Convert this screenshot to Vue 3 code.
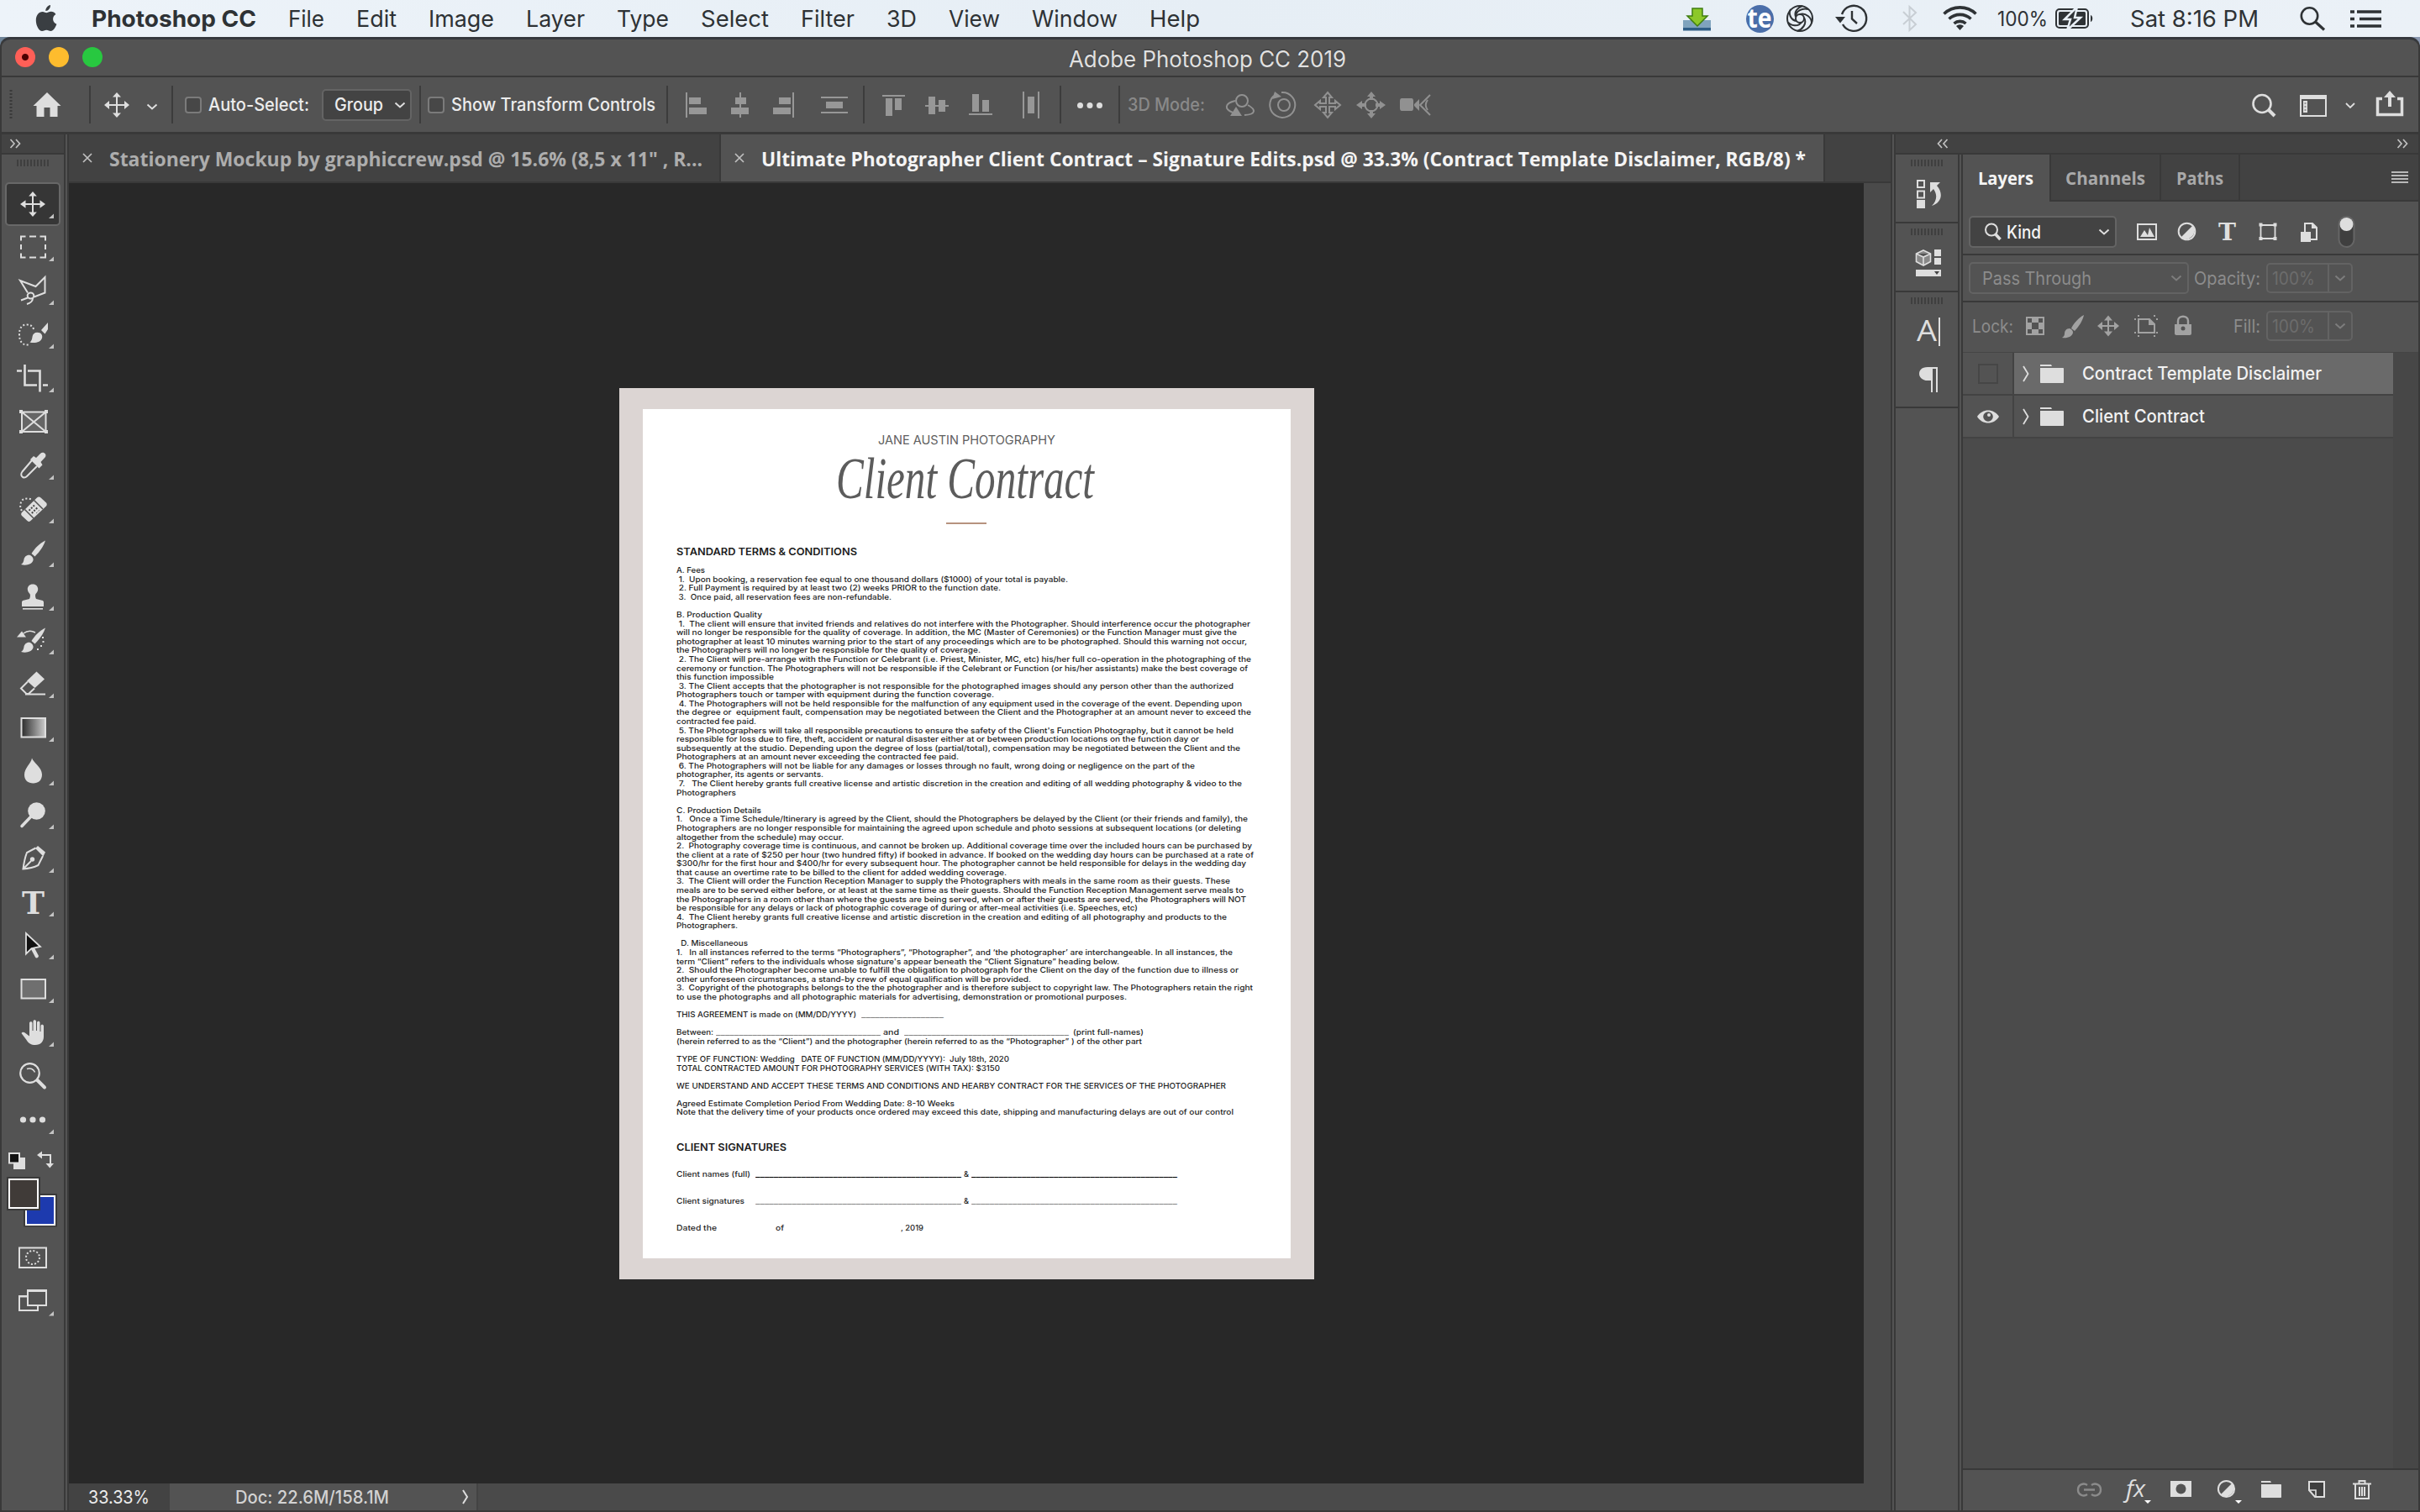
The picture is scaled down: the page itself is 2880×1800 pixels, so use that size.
<script setup>
// stretches a text to the given width in pixels
const vFit = {
  mounted(el, { value }) {
    const natural = el.getBoundingClientRect().width;
    el.style.transform = `scaleX(${value / natural})`;
    el.style.width = value + "px";
  },
};

const menus = [
  ["File", 43],
  ["Edit", 48],
  ["Image", 78],
  ["Layer", 70],
  ["Type", 62],
  ["Select", 81],
  ["Filter", 64],
  ["3D", 36],
  ["View", 61],
  ["Window", 102],
  ["Help", 60],
];

const brush =
  '<path d="M54 11.5C48 14 41 21 37.500 27l4 3.500C47 25 52 18 54 11.500z"/><path d="M36 29c-4-1-7 2-7.500 5-.4 3-1.500 5-3.500 6 6 1.800 13 0 14.500-5 .5-2-.8-4.500-3.500-6z"/>';

// every tool is drawn in a 72x52 cell, starting 4px from the left edge
const tools = [
  { flyout: true, art: '<path class="ln" d="M28 26H50M39 15V37"/><path d="M24 26l6.500-4.800v9.600zM54 26l-6.500-4.800v9.600zM39 11l-4.800 5.500h9.600zM39 41l-4.800-5.500h9.600z"/>' },
  { flyout: true, art: '<path class="ln" d="M25 18.500V13.500H30.500M35 13.500h8M47.500 13.500H54V18.500M54 23v6M54 33.500V38.500H47.500M43 38.500h-8M30.500 38.500H25V33.500M25 29v-6"/>' },
  { flyout: true, art: '<path class="ln" d="M33 28.500L24 14 42.500 21 53.500 10V28.500L40.500 33.500M33 34.500L25 37.500M39 35c0 3-3 6-7 7"/><ellipse class="ln" cx="36.500" cy="32" rx="3.800" ry="3.500"/>' },
  { flyout: true, art: '<path class="ln" stroke-dasharray="2 2.400" d="M40 20c-1-4-4-5.500-8-5.500-6 0-9 4-9 11.500s3 12.500 9 12.500h3"/><path d="M57 12L49 21l4.500 4.500L57 20zM48 24.500c-5-2-9 0-9.500 4.500-.3 3-1 5-3 6.500 6 1.500 13 0 14.500-5 .7-2.500 0-4.500-2-6z"/>' },
  { flyout: true, art: '<path class="ln" stroke-width="2.600" d="M20 17.500h6M29.500 10V34.500H44M33 17.500H47.500V42.500M51 34.500h6"/>' },
  { flyout: false, art: '<path fill="#666" class="ln" d="M26 14.500H54.500V38H26zM26 14.500L54.500 38M54.500 14.500L26 38"/><path d="M23 12h4v4h-4zM53 12h4v4h-4zM23 36h4v4h-4zM53 36h4v4h-4z"/>' },
  { flyout: true, art: '<path class="ln" d="M38 20L26.500 33.500c-2 2.500-1.500 5 .5 6.500 2 1 3.500.5 5-1L44 27"/><path d="M36 19l4-4 3 2 5-5c3-3 8 0 6 4l-5.500 6 2 3.500-4 4z"/>' },
  { flyout: true, art: '<path class="ln" stroke-dasharray="2 2.400" d="M26 28c-3-4-2-10 1-13 3-2 8-2 11 0"/><path d="M44 12.500c1.500-1.500 3-1.500 4.500 0l6.500 6c1 1.200 1 2.500 0 4L37 39.500c-1.500 1.800-3 1.800-4.500.5L26 34c-1.200-1.200-1-2.500 0-4z"/><path stroke="#535353" stroke-width="1.500" d="M40.500 15.500l10.500 10.500M29.500 26.500L40 37"/><path fill="none" stroke="#444" stroke-width="2" stroke-dasharray="2 2.500" d="M39.500 21.500l7 6.500M37 24l7 6.500M34.500 26.500l6.500 6"/>' },
  { flyout: true, art: brush },
  { flyout: true, art: '<path d="M39 11.500c4 0 6.200 2.700 6.200 6 0 2.500-1.700 4.200-2.700 5.500-.7 1-.7 4 .5 6l7 1.700c1.500.4 2 1.200 2 2.300v5H26v-5c0-1.100.5-1.900 2-2.300l7-1.700c1.200-2 1.200-5 .5-6-1-1.300-2.700-3-2.700-5.500 0-3.300 2.200-6 6.200-6z"/><path d="M27 40h24v1.600H27z"/>' },
  { flyout: true, art: brush + '<path d="M20 22.500l6-7 5 7z"/><path class="ln" stroke-width="1.500" d="M28 18c4-3 9-3.500 14-1"/><path d="M50 22h2v2h-2zM50.500 27h2v2h-2zM48 32h2v2h-2zM44 36h2v2h-2z"/>' },
  { flyout: true, art: '<path d="M43.500 11.500L53 20.500 41.500 31 32 22.500z"/><path class="ln" d="M33 23.500L25 31.500l6.500 6.500H34l7-6.500M30 38.500H54"/>' },
  { flyout: true, art: '<rect x="25.500" y="15" width="28.500" height="22.500" fill="url(#grad)" stroke="#dedede" stroke-width="2"/>' },
  { flyout: true, art: '<path d="M38 10.500c1.500 5 12 11 12 19.500 0 7-4.500 10.500-10.500 10.500S29 37 29 30.500C29 22 37 17 38 10.500z"/>' },
  { flyout: true, art: '<circle cx="43.500" cy="21.500" r="10.300"/><path class="ln" stroke-width="3.500" stroke-linecap="round" d="M37 28L26 39.500"/>' },
  { flyout: true, art: '<path class="ln" d="M42.500 13.500L32 19c-2 5-3.500 12-4.500 19.500 7-.5 13-2 18-4.500l5.500-11M28.500 37.500L37 29"/><circle cx="38.500" cy="27" r="2.700"/><path d="M42 14l3-3 9 7.500-2.500 5z"/>' },
  { flyout: true, art: '<text x="39.500" y="39.500" text-anchor="middle" font-family="DejaVu Serif, serif" font-weight="bold" font-size="37" textLength="27" lengthAdjust="spacingAndGlyphs">T</text>' },
  { flyout: true, art: '<path fill="#111" stroke="#dedede" stroke-width="1.800" d="M31 12V36.500L37.500 30 48 28z"/><path d="M37 31l4-1.500 5 9.500c-1 3-3 3-4 1.500z"/>' },
  { flyout: true, art: '<rect x="25.500" y="15" width="28.500" height="22.500" fill="#6f6f6f" stroke="#dedede" stroke-width="2"/>' },
  { flyout: true, art: '<path d="M25.500 27c1.500-2.500 4-1 5.500.5l4 3V15c0-2.500 3.500-2.500 3.500 0v9h1V13c0-2.500 3.500-2.500 3.500 0v11h1V14.500c0-2.500 3.500-2.500 3.500 0V25h1v-6.500c0-2.500 3.500-2 3.500 0V31c0 6-3.500 10-10 10-5 0-8-2-10.500-6z"/>' },
  { flyout: false, art: '<circle class="ln" stroke-width="2.200" cx="35.500" cy="22.500" r="11.300"/><path class="ln" stroke-width="1.500" d="M32 17.500c4-1.500 8 0 9.500 4"/><path class="ln" stroke-width="4" stroke-linecap="round" d="M44.500 31L53 39.500"/>' },
  { flyout: true, art: '<circle cx="27.500" cy="26" r="3.600"/><circle cx="39" cy="26" r="3.600"/><circle cx="50.500" cy="26" r="3.600"/>' },
];

// [text, width]; null is an empty line
const terms = [
  ["A. Fees", 34],
  [" 1.  Upon booking, a reservation fee equal to one thousand dollars ($1000) of your total is payable.", 466],
  [" 2. Full Payment is required by at least two (2) weeks PRIOR to the function date.", 386],
  [" 3.  Once paid, all reservation fees are non-refundable.", 256],
  null,
  ["B. Production Quality", 102],
  [" 1.  The client will ensure that invited friends and relatives do not interfere with the Photographer. Should interference occur the photographer", 683],
  ["will no longer be responsible for the quality of coverage. In addition, the MC (Master of Ceremonies) or the Function Manager must give the", 667],
  ["photographer at least 10 minutes warning prior to the start of any proceedings which are to be photographed. Should this warning not occur,", 679],
  ["the Photographers will no longer be responsible for the quality of coverage.", 362],
  [" 2. The Client will pre-arrange with the Function or Celebrant (i.e. Priest, Minister, MC, etc) his/her full co-operation in the photographing of the", 684],
  ["ceremony or function. The Photographers will not be responsible if the Celebrant or Function (or his/her assistants) make the best coverage of", 680],
  ["this function impossible", 116],
  [" 3. The Client accepts that the photographer is not responsible for the photographed images should any person other than the authorized", 663],
  ["Photographers touch or tamper with equipment during the function coverage.", 378],
  [" 4. The Photographers will not be held responsible for the malfunction of any equipment used in the coverage of the event. Depending upon", 673],
  ["the degree or  equipment fault, compensation may be negotiated between the Client and the Photographer at an amount never to exceed the", 684],
  ["contracted fee paid.", 95],
  [" 5. The Photographers will take all responsible precautions to ensure the safety of the Client's Function Photography, but it cannot be held", 663],
  ["responsible for loss due to fire, theft, accident or natural disaster either at or between production locations on the function day or", 622],
  ["subsequently at the studio. Depending upon the degree of loss (partial/total), compensation may be negotiated between the Client and the", 671],
  ["Photographers at an amount never exceeding the contracted fee paid.", 336],
  [" 6. The Photographers will not be liable for any damages or losses through no fault, wrong doing or negligence on the part of the", 617],
  ["photographer, its agents or servants.", 175],
  [" 7.   The Client hereby grants full creative license and artistic discretion in the creation and editing of all wedding photography & video to the", 673],
  ["Photographers", 71],
  null,
  ["C. Production Details", 101],
  ["1.   Once a Time Schedule/Itinerary is agreed by the Client, should the Photographers be delayed by the Client (or their friends and family), the", 680],
  ["Photographers are no longer responsible for maintaining the agreed upon schedule and photo sessions at subsequent locations (or deleting", 672],
  ["altogether from the schedule) may occur.", 199],
  ["2.  Photography coverage time is continuous, and cannot be broken up. Additional coverage time over the included hours can be purchased by", 685],
  ["the client at a rate of $250 per hour (two hundred fifty) if booked in advance. If booked on the wedding day hours can be purchased at a rate of", 687],
  ["$300/hr for the first hour and $400/hr for every subsequent hour. The photographer cannot be held responsible for delays in the wedding day", 678],
  ["that cause an overtime rate to be billed to the client for added wedding coverage.", 393],
  ["3.  The Client will order the Function Reception Manager to supply the Photographers with meals in the same room as their guests. These", 659],
  ["meals are to be served either before, or at least at the same time as their guests. Should the Function Reception Management serve meals to", 675],
  ["the Photographers in a room other than where the guests are being served, when or after their guests are served, the Photographers will NOT", 678],
  ["be responsible for any delays or lack of photographic coverage of during or after-meal activities (i.e. Speeches, etc)", 549],
  ["4.  The Client hereby grants full creative license and artistic discretion in the creation and editing of all photography and products to the", 655],
  ["Photographers.", 73],
  null,
  ["  D. Miscellaneous", 85],
  ["1.   In all instances referred to the terms “Photographers”, “Photographer”, and ‘the photographer’ are interchangeable. In all instances, the", 662],
  ["term “Client” refers to the individuals whose signature's appear beneath the “Client Signature” heading below.", 527],
  ["2.  Should the Photographer become unable to fulfill the obligation to photograph for the Client on the day of the function due to illness or", 669],
  ["other unforeseen circumstances, a stand-by crew of equal qualification will be provided.", 422],
  ["3.  Copyright of the photographs belongs to the the photographer and is therefore subject to copyright law. The Photographers retain the right", 686],
  ["to use the photographs and all photographic materials for advertising, demonstration or promotional purposes.", 536],
  null,
];

const closing = [
  ["(herein referred to as the “Client”) and the photographer (herein referred to as the “Photographer” ) of the other part", 554],
  null,
  ["TYPE OF FUNCTION: Wedding   DATE OF FUNCTION (MM/DD/YYYY):  July 18th, 2020", 396],
  ["TOTAL CONTRACTED AMOUNT FOR PHOTOGRAPHY SERVICES (WITH TAX): $3150", 385],
  null,
  ["WE UNDERSTAND AND ACCEPT THESE TERMS AND CONDITIONS AND HEARBY CONTRACT FOR THE SERVICES OF THE PHOTOGRAPHER", 654],
  null,
  ["Agreed Estimate Completion Period From Wedding Date: 8-10 Weeks", 331],
  ["Note that the delivery time of your products once ordered may exceed this date, shipping and manufacturing delays are out of our control", 663],
];

const layers = [
  { name: "Contract Template Disclaimer", width: 285, visible: false, selected: true },
  { name: "Client Contract", width: 146, visible: true, selected: false },
];
</script>

<template>
  <div class="screen">
    <header class="menubar">
      <svg class="apple" viewBox="0 0 26 32" width="26" height="32">
        <path d="M18 0c.3 3.500-2.500 7-5.700 7C12 3.800 15 .5 18 0zM13.300 9.300c1.200 0 3-1.500 5.500-1.500 2.200 0 4.300 1.200 5.600 3.100-5 3-4 9.800 1 11.800-1.500 4.300-4.200 8.300-6.900 8.300-2 0-2.700-1.300-5.200-1.300-2.500 0-3.400 1.300-5.200 1.300C4.500 31 .8 24.500.8 18.200c0-6.200 3.700-10.200 7.700-10.200 2.200 0 3.800 1.300 4.800 1.300z" />
      </svg>
      <b v-fit="196" class="app-name">Photoshop CC</b>
      <nav class="menus">
        <span v-for="m in menus" :key="m[0]" v-fit="m[1]">{{ m[0] }}</span>
      </nav>
      <div class="tray">
        <svg viewBox="2000 0 370 44" width="370" height="44">
          <path d="M2003 24h33v12h-33z" fill="#7fa3bd" />
          <path d="M2003 33h33v3.500h-33z" fill="#2e5d86" />
          <path d="M2014 10h12v9h6l-12 12-12-12h6z" fill="#8cc829" stroke="#3f7d10" stroke-width="1.500" />
          <circle cx="2094.500" cy="22.500" r="16.500" fill="#4a6ea9" />
          <text x="2094" y="33" text-anchor="middle" fill="#fff" font-family="Open Sans, sans-serif" font-weight="bold" font-size="33" textLength="29" lengthAdjust="spacingAndGlyphs">te</text>
          <g fill="none" stroke="#2e3235" stroke-width="2">
            <circle cx="2142" cy="22" r="15" />
            <circle cx="2142" cy="22" r="5" />
            <path d="M2137 20c0-7 8-11 15-9M2142 17c7-2 14 4 14 10M2147 21c4 7-2 14-8 16M2144 26.500c-4 6-13 4-16 0M2138 25c-7-1-10-9-7-14M2137 20c-2-6 2-11 8-13" />
            <path d="M2192 17a15 15 0 1 1 1 12M2204 13v9.500l6 5.500" stroke-width="2.400" />
            <path d="M2265 14l15 15-7.500 7V8l7.500 7-15 14" stroke="#c8ced4" />
          </g>
          <path d="M2184 20h12l-6 7.500z" fill="#2e3235" />
          <g fill="none" stroke="#2e3235" stroke-width="3.600">
            <path d="M2313.500 16.500a27.500 27.500 0 0 1 38 0M2319.500 22.500a19 19 0 0 1 26 0M2325.500 28a10.500 10.500 0 0 1 14 0" />
          </g>
          <path d="M2328 31a6.500 6.500 0 0 1 9 0l-4.500 5z" fill="#2e3235" />
        </svg>
        <span v-fit="60" class="percent">100%</span>
        <svg class="battery" viewBox="2446 0 46 44" width="46" height="44">
          <rect x="2447" y="11" width="38" height="22" rx="4" fill="none" stroke="#2e3235" stroke-width="2" />
          <rect x="2450" y="14" width="32" height="16" rx="1.500" fill="#2e3235" />
          <path d="M2488 18c3 1 3 7 0 8z" fill="#2e3235" />
          <path d="M2472 8l-15 15h7l-4 13 16-15h-7z" fill="#2e3235" stroke="#e9f0f7" stroke-width="2.500" />
        </svg>
        <span v-fit="153" class="clock">Sat 8:16 PM</span>
        <svg viewBox="2736 0 104 44" width="104" height="44" fill="none" stroke="#2e3235">
          <circle cx="2748.500" cy="19" r="9.700" stroke-width="2.600" />
          <path d="M2755.500 26l10.500 9.500" stroke-width="3.200" />
          <path d="M2797 14h5M2797 22.500h5M2797 31h5M2805 14h29M2808 22.500h26M2805 31h29" stroke-width="3.600" />
        </svg>
      </div>
    </header>

    <div class="window">
      <div class="titlebar">
        <div class="lights">
          <i class="close"></i>
          <i class="minimize"></i>
          <i class="maximize"></i>
        </div>
        <span v-fit="330" class="title">Adobe Photoshop CC 2019</span>
      </div>

      <div class="options">
        <svg viewBox="2 92 204 66" width="204" height="66" class="light">
          <path stroke="#3a3a3a" stroke-width="3" stroke-dasharray="2 2" d="M13 107v36" />
          <path d="M56 110l16.500 16h-4v13h-9v-11h-7v11h-9v-13h-4z" />
          <path class="sep" d="M107 102v45M205 102v45" />
          <path class="ln" d="M128 125h23M139 114v22" />
          <path d="M124 125l6-5v10zM154 125l-6-5v10zM139 110l-5 5.500h10zM139 140l-5-5.500h10z" />
          <path class="ln" stroke-width="2" d="M175.500 124.500l5.500 5 5.500-5" />
        </svg>
        <i class="check first"></i>
        <span v-fit="120" class="label">Auto-Select:</span>
        <div class="select group">
          <span v-fit="58">Group</span>
          <svg viewBox="0 0 14 8" width="14" height="8"><path class="ln" d="M1.500 1.500L7 6.500l5.500-5" /></svg>
        </div>
        <svg viewBox="490 92 19 66" width="19" height="66"><path class="sep" d="M500 102v45" /></svg>
        <i class="check"></i>
        <span v-fit="243" class="label">Show Transform Controls</span>
        <svg viewBox="780 92 562 66" width="562" height="66">
          <path class="sep" d="M794 102v45M1028 102v45M1262 102v45M1332 102v45" />
          <g fill="#979797">
            <path d="M816 110h2v30h-2zM820 116h14v8h-14zM820 128h21v8h-21z" />
            <path d="M880 110h2v30h-2zM875 116h13v8h-13zM870 128h21v8h-21z" />
            <path d="M943 110h2v30h-2zM927 116h14v8h-14zM920 128h21v8h-21z" />
            <path d="M977 115h32v2h-32zM977 133h32v2h-32zM983 121h20v8h-20z" />
            <path d="M1050 113h27v2h-27zM1054 117h8v21h-8zM1065 117h8v14h-8z" />
            <path d="M1101 125h28v2h-28zM1105 115h8v21h-8zM1117 119h8v14h-8z" />
            <path d="M1153 135h28v2h-28zM1157 112h8v21h-8zM1169 119h8v14h-8z" />
            <path d="M1217 109h2v32h-2zM1235 109h2v32h-2zM1223 115h8v20h-8z" />
          </g>
          <g fill="#dedede">
            <circle cx="1285.500" cy="125.500" r="3.500" />
            <circle cx="1297" cy="125.500" r="3.500" />
            <circle cx="1308.500" cy="125.500" r="3.500" />
          </g>
        </svg>
        <span v-fit="92" class="label dim">3D Mode:</span>
        <svg viewBox="1456 92 252 66" width="252" height="66" class="mode">
          <g fill="none" stroke="#919191" stroke-width="2">
            <circle cx="1479" cy="120" r="7" />
            <path d="M1471 120c-13 3-13 10-3 14M1486 125c9 5 11 11-4 12" />
            <path d="M1517 114a15 15 0 1 0 9-4" />
            <circle cx="1529" cy="125" r="7" />
            <path d="M1581 110l5 6h-3v7h7v-3l6 5-6 5v-3h-7v7h3l-5 6-5-6h3v-7h-7v3l-6-5 6-5v3h7v-7h-3z" />
            <circle cx="1633" cy="125" r="7.500" />
            <path d="M1703 113l-12 12 12 12M1700 119c-3 4-3 8 0 12" />
          </g>
          <path fill="#919191" d="M1465 138l7-11 7 11zM1515 118l3-9 8 6zM1633 109l5 6h-3v4h-4v-4h-3zM1633 141l5-6h-3v-4h-4v4h-3zM1615 125l7-5v3h5v4h-5v3zM1650 125l-7-5v3h-5v4h5v3zM1667 120c0-2 1-3 2-3h12c1 0 2 1 2 3v9c0 2-1 3-2 3h-12c-1 0-2-1-2-3zM1684 124l6-6v14l-6-6z" />
        </svg>
        <svg viewBox="2676 92 190 66" width="190" height="66" class="light right">
          <circle class="ln" cx="2692" cy="123.500" r="10.500" stroke-width="2.600" />
          <path class="ln" d="M2699 130l8 8" stroke-width="4" />
          <path class="ln" d="M2738 115h30v23h-30z" />
          <path d="M2737 113h32v5h-32zM2741 120h5v14h-5z" />
          <path stroke="#535353" d="M2742.500 123h2M2742.500 127h2M2742.500 131h2" />
          <path class="ln" stroke-width="1.800" d="M2792 123l5 5 5-5" />
          <path class="ln" stroke-width="3.500" d="M2835 117.500h-5.500v19h29v-19h-5.500" />
          <path d="M2844 108l7 8h-5v11h-4v-11h-5z" />
        </svg>
      </div>

      <div class="workspace">
        <aside class="toolbar">
          <div class="dock-head">
            <svg viewBox="0 0 14 12" width="14" height="12"><path class="thin" d="M1.500 1L6 6l-4.500 5M8 1l4.500 5L8 11" /></svg>
          </div>
          <i class="grip"></i>
          <div class="tools">
            <div v-for="(tool, i) in tools" :key="i" class="tool">
              <svg viewBox="4 0 72 52" width="72" height="52">
                <defs v-if="i === 12">
                  <linearGradient id="grad"><stop stop-color="#2a2a2a" /><stop offset="1" stop-color="#ccc" /></linearGradient>
                </defs>
                <rect v-if="i === 0" x="7" y="1" width="64" height="50" rx="4" fill="#363636" stroke="#686868" stroke-width="2" />
                <g v-html="tool.art"></g>
                <path v-if="tool.flyout" d="M64 37.500v5.500h-6z" fill="#c4c4c4" />
              </svg>
            </div>
          </div>
          <svg class="light" viewBox="4 1360 72 212" width="72" height="212">
            <path d="M16 1379h14v14H16z" />
            <path d="M11 1374h12v11.500H11z" fill="#111" stroke="#dedede" stroke-width="2" />
            <path class="ln" d="M49 1376h11v10" />
            <path d="M44 1376l6-4.500v9zM54.500 1386h9.500l-4.700 5.500z" />
            <path d="M28 1422h40v39.500H28z" fill="#3a3a3a" />
            <path d="M31 1425h34v34H31z" fill="#1d3aae" stroke="#fff" stroke-width="2" />
            <path d="M8 1402h40v40H8z" fill="#3a3a3a" />
            <path d="M11 1405h34v34H11z" fill="#403b38" stroke="#fff" stroke-width="2" />
            <path class="ln" d="M23 1486.500h32v23.500H23z" />
            <circle class="ln" cx="39" cy="1498" r="8" stroke-dasharray="2 2.200" />
            <path class="ln" d="M32 1544h-9v17h22v-5M33 1537.500h22v17.500H33z" />
            <path d="M32 1536h24v3H32zM22 1543h10v2.500H22z" />
            <path d="M64 1562v5.500h-6z" fill="#c4c4c4" />
          </svg>
        </aside>

        <main class="documents">
          <div class="tabs">
            <div class="tab">
              <svg viewBox="0 0 12 12" width="12" height="12"><path class="thin" d="M1 1l10 10M11 1L1 11" /></svg>
              <span v-fit="706">Stationery Mockup by graphiccrew.psd @ 15.6% (8,5 x 11" , R...</span>
            </div>
            <div class="tab active">
              <svg viewBox="0 0 12 12" width="12" height="12"><path class="thin" d="M1 1l10 10M11 1L1 11" /></svg>
              <span v-fit="1243">Ultimate Photographer Client Contract – Signature Edits.psd @ 33.3% (Contract Template Disclaimer, RGB/8) *</span>
            </div>
          </div>

          <div class="canvas">
            <div class="artboard">
              <article class="page">
                <p class="studio"><span v-fit="211">JANE AUSTIN PHOTOGRAPHY</span></p>
                <h1><span v-fit="307">Client Contract</span></h1>
                <i class="rule"></i>
                <h2 class="first"><span v-fit="215">STANDARD TERMS &amp; CONDITIONS</span></h2>
                <div class="lines">
                  <p v-for="(line, i) in terms" :key="i"><span v-if="line" v-fit="line[1]">{{ line[0] }}</span></p>
                  <p>
                    <span v-fit="214">THIS AGREEMENT is made on (MM/DD/YYYY)</span>
                    <span v-fit="98" class="blank after">__________________</span>
                  </p>
                  <p></p>
                  <p>
                    <span v-fit="44">Between:</span>
                    <span v-fit="196" class="blank near">____________________________________</span>
                    <span v-fit="19" class="near">and</span>
                    <span v-fit="196" class="blank after">____________________________________</span>
                    <span v-fit="84" class="after">(print full-names)</span>
                  </p>
                  <p v-for="(line, i) in closing" :key="'c' + i"><span v-if="line" v-fit="line[1]">{{ line[0] }}</span></p>
                </div>
                <h2 class="second"><span v-fit="131">CLIENT SIGNATURES</span></h2>
                <div class="signatures">
                  <p>
                    <span v-fit="88">Client names (full)</span>
                    <span v-fit="245" class="blank strong after">_____________________________________________</span>
                    <span v-fit="6" class="near">&amp;</span>
                    <span v-fit="245" class="blank strong near">_____________________________________________</span>
                  </p>
                  <p>
                    <span v-fit="81">Client signatures</span>
                    <span v-fit="245" class="blank far">_____________________________________________</span>
                    <span v-fit="6" class="near">&amp;</span>
                    <span v-fit="245" class="blank near">_____________________________________________</span>
                  </p>
                  <p class="dated">
                    <span v-fit="48">Dated the</span>
                    <span v-fit="10">of</span>
                    <span v-fit="27">, 2019</span>
                  </p>
                </div>
              </article>
            </div>
          </div>
          <footer class="status">
            <div class="zoom"><span v-fit="73">33.33%</span></div>
            <div class="doc-size">
              <span v-fit="183">Doc: 22.6M/158.1M</span>
              <svg viewBox="0 0 10 20" width="10" height="20"><path class="ln" d="M2 2l5 8-5 8" /></svg>
            </div>
          </footer>
        </main>

        <aside class="side">
          <div class="side-head">
            <svg viewBox="0 0 14 12" width="14" height="12"><path class="thin" d="M6 1L1.500 6 6 11M12.500 1L8 6l4.500 5" /></svg>
            <svg viewBox="0 0 14 12" width="14" height="12"><path class="thin" d="M1.500 1L6 6l-4.500 5M8 1l4.500 5L8 11" /></svg>
          </div>
          <div class="side-body">
            <div class="dock">
              <div class="cell">
                <i class="grip"></i>
                <svg viewBox="2256 200 74 60" width="74" height="60" class="light">
                  <path class="ln" d="M2282 215h8v8h-8zM2282 227.500h8v8h-8z" />
                  <path d="M2281 238h10v10h-10zM2297 217h12l-4 4c8 9 6 20-6 24 6-6 7-13 2-20l-4 4z" />
                </svg>
              </div>
              <div class="cell">
                <i class="grip"></i>
                <svg viewBox="2256 282 74 60" width="74" height="60" class="light">
                  <path fill="#888" stroke="#dedede" stroke-width="1.600" d="M2289 298l8.500 4v9.500l-8.500 4.500-8.500-4.500V302zM2280.500 302l8.500 4 8.500-4M2289 306v10" />
                  <path d="M2302 297h8v8h-8zM2302 307h8v8h-8zM2280 321h30v8h-30z" />
                  <path fill="#444" d="M2302 323h6l-3 4z" />
                </svg>
              </div>
              <div class="cell tall">
                <i class="grip"></i>
                <svg viewBox="2256 364 74 116" width="74" height="116" class="light">
                  <text x="2281" y="406" font-family="Open Sans, sans-serif" font-size="34" textLength="24" lengthAdjust="spacingAndGlyphs">A</text>
                  <path d="M2307 378h2v34h-2z" />
                  <path d="M2306 437v30h-2v-28h-4v28h-2v-14h-4c-5 0-10-3-10-8s4-8 10-8z" />
                </svg>
              </div>
              <div class="rest"></div>
            </div>

            <section class="panel">
              <div class="panel-tabs">
                <div class="ptab active"><span v-fit="66">Layers</span></div>
                <div class="ptab channels"><span v-fit="95">Channels</span></div>
                <div class="ptab paths"><span v-fit="56">Paths</span></div>
                <svg class="burger" viewBox="0 0 20 16" width="20" height="16"><path stroke="#b8b8b8" stroke-width="2" d="M0 2h20M0 6h20M0 10h20M0 14h20" /></svg>
              </div>

              <div class="row filter">
                <div class="select kind">
                  <svg viewBox="0 0 22 22" width="22" height="22"><circle class="ln" cx="9" cy="8.500" r="7" /><path class="ln" stroke-width="3.600" d="M13.500 13.500l6 6.500" /></svg>
                  <span v-fit="41">Kind</span>
                  <svg class="chev" viewBox="0 0 14 8" width="14" height="8"><path class="ln" d="M1.500 1.500L7 6.500l5.500-5" /></svg>
                </div>
                <svg viewBox="2519 250 300 52" width="300" height="52" class="light">
                  <path class="ln" d="M2544 267h22v18h-22z" />
                  <path d="M2547 282l5-8 4 6 2-9 6 11z" />
                  <circle class="ln" cx="2602.500" cy="275.500" r="9.800" />
                  <path d="M2609.500 268.500a10 10 0 0 1-14 14z" />
                  <text x="2650.500" y="286" text-anchor="middle" font-family="DejaVu Serif, serif" font-weight="bold" font-size="28" textLength="21" lengthAdjust="spacingAndGlyphs">T</text>
                  <path class="ln" stroke-width="1.800" d="M2690.500 268h17v16h-17z" />
                  <path class="knob" d="M2688.500 265.500h4v4h-4zM2705.500 265.500h4v4h-4zM2688.500 282h4v4h-4zM2705.500 282h4v4h-4z" />
                  <path class="ln" d="M2743 276v-10h9l5 5v14h-7" />
                  <path d="M2738 276h12v12h-12zM2751 265v7h7z" />
                  <rect x="2783.500" y="258" width="18" height="36" rx="9" fill="#3f3f3f" stroke="#666" stroke-width="2" />
                  <circle cx="2792.500" cy="267" r="8" />
                </svg>
              </div>

              <div class="row blend">
                <div class="select mode-select">
                  <span v-fit="130">Pass Through</span>
                  <svg viewBox="0 0 14 8" width="14" height="8"><path class="ln" d="M1.500 1.500L7 6.500l5.500-5" /></svg>
                </div>
                <span v-fit="79" class="field-label">Opacity:</span>
                <div class="number">
                  <span v-fit="51">100%</span>
                  <svg viewBox="0 0 14 8" width="14" height="8"><path class="ln" d="M1.500 1.500L7 6.500l5.500-5" /></svg>
                </div>
              </div>

              <div class="row lock">
                <span v-fit="49" class="lock-label">Lock:</span>
                <svg viewBox="2396 361 262 54" width="262" height="54" fill="#a2a2a2">
                  <path fill="none" stroke="#a2a2a2" stroke-width="2" d="M2412 378h20v20h-20z" />
                  <path d="M2418 378h8v6h-8zM2412 384h6v8h-6zM2426 384h6v8h-6zM2418 392h8v6h-8z" />
                  <path d="M2480 375c-6 3-13 11-15 16l4 3c5-5 10-13 11-19zM2463 391c-4 0-6 3-6 6 0 2-1 4-3 5 6 1 12-1 13-6 0-2-1-4-4-5z" />
                  <path fill="none" stroke="#a2a2a2" stroke-width="2" d="M2500 388h18M2509 379v18" />
                  <path d="M2496 388l6-5v10zM2522 388l-6-5v10zM2509 375.500l-5 6h10zM2509 400.500l-5-6h10z" />
                  <path fill="none" stroke="#a2a2a2" stroke-width="2" d="M2545 380h13l6 6v10h-19zM2558 380v6h6" />
                  <path d="M2540 379h2v2h-2zM2566 379h2v2h-2zM2540 395h2v2h-2zM2566 395h2v2h-2zM2544 375h2v2h-2zM2563 375h2v2h-2zM2544 399h2v2h-2zM2563 399h2v2h-2zM2557 379l8 8h-8z" />
                  <path d="M2588 386h20v11c0 1-1 2-2 2h-16c-1 0-2-1-2-2z" />
                  <path fill="none" stroke="#a2a2a2" stroke-width="2.400" d="M2592 386v-4c0-7 12-7 12 0v4" />
                  <circle cx="2598" cy="391" r="2.500" fill="#535353" />
                </svg>
                <span v-fit="32" class="fill-label">Fill:</span>
                <div class="number">
                  <span v-fit="51">100%</span>
                  <svg viewBox="0 0 14 8" width="14" height="8"><path class="ln" d="M1.500 1.500L7 6.500l5.500-5" /></svg>
                </div>
              </div>

              <div class="layer-list">
                <div v-for="layer in layers" :key="layer.name" class="layer" :class="{ selected: layer.selected }">
                  <div class="eye">
                    <svg v-if="layer.visible" viewBox="0 0 26 18" width="26" height="18">
                      <path fill="#dedede" d="M0 9C6-1 20-1 26 9 20 19 6 19 0 9z" />
                      <circle cx="13" cy="9" r="5.800" fill="#535353" />
                      <circle cx="14" cy="7" r="2" fill="#dedede" />
                    </svg>
                    <i v-else class="hidden-box"></i>
                  </div>
                  <div class="layer-main">
                    <svg viewBox="0 0 54 26" width="54" height="26" class="light">
                      <path class="ln" stroke-width="1.800" d="M2 4l5.500 9L2 22" />
                      <path d="M22 2h13l1 2H22zM22 6h27c.6 0 1 .4 1 1v16c0 .6-.4 1-1 1H23c-.6 0-1-.4-1-1z" />
                    </svg>
                    <span v-fit="layer.width">{{ layer.name }}</span>
                  </div>
                </div>
              </div>

              <footer class="panel-foot">
                <svg viewBox="2336 1750 542 48" width="542" height="48" class="light">
                  <g fill="none" stroke="#8b8b8b" stroke-width="2.400">
                    <path d="M2484 1768c-4-3-11-1-11 5.500s7 8.500 11 5.500M2489 1768c4-3 11-1 11 5.500s-7 8.500-11 5.500M2480 1773.500h13" />
                  </g>
                  <text x="2530" y="1782" font-family="Open Sans, sans-serif" font-style="italic" font-size="27" textLength="23" lengthAdjust="spacingAndGlyphs">fx</text>
                  <path d="M2552 1786h8l-4 4zM2660 1786h8l-4 4z" fill="#fff" />
                  <path d="M2583 1763h25v19h-25z" />
                  <circle cx="2595.500" cy="1772.500" r="6" fill="#535353" />
                  <circle class="ln" cx="2649.500" cy="1772.500" r="9.600" />
                  <path d="M2656.500 1765.500a10 10 0 0 1-14 14z" />
                  <path d="M2691 1763h11l1 2h-12zM2691 1767h23c.6 0 1 .4 1 1v14c0 .6-.4 1-1 1h-22c-.6 0-1-.4-1-1z" />
                  <path class="ln" fill="#3f3f3f" d="M2748 1764h18v18h-11l-7-8z" />
                  <path class="ln" stroke-width="1.600" d="M2748 1774h8v8" />
                  <path class="ln" d="M2800 1766.500h22M2803 1767v17h16v-17M2807.500 1766v-3h7v3M2808 1770v11M2811 1770v11M2814 1770v11" />
                </svg>
              </footer>
            </section>
          </div>
        </aside>
      </div>
    </div>
  </div>
</template>

<style>
body {
  margin: 0;
  background: #3a3a3a;
}
.ln {
  stroke: #dedede;
}
.ln:not([fill]) {
  fill: none;
}
.ln:not([stroke-width]) {
  stroke-width: 2;
}
</style>

<style scoped>
.screen {
  width: 2880px;
  height: 1800px;
  overflow: hidden;
  display: flex;
  flex-direction: column;
  background: linear-gradient(90deg, #6d8296, #8a97b0);
  font-family: Inter, "Liberation Sans", sans-serif;
  font-size: 21px;
  color: #ececec;
}
span,
.app-name {
  display: inline-block;
  flex: none;
  width: max-content;
  white-space: pre;
  transform-origin: 0 50%;
}
svg {
  display: block;
  flex: none;
}
p,
h1,
h2 {
  margin: 0;
}
.light {
  fill: #dedede;
}
.sep {
  stroke: #3c3c3c;
  stroke-width: 2;
}
.thin {
  fill: none;
  stroke: #c0c0c0;
  stroke-width: 1.7;
}

/* system menu bar */
.menubar {
  height: 44px;
  flex: none;
  display: flex;
  align-items: center;
  background: linear-gradient(90deg, #edf3f9, #e6eef5 50%, #ebf1f7);
  color: #2e3235;
  font-size: 27.5px;
}
.apple {
  margin: 0 41px 0 42px;
  height: 32px;
  fill: #3a3e42;
}
.app-name {
  font-weight: 700;
}
.menus {
  display: flex;
  gap: 38px;
  margin-left: 37.5px;
}
.tray {
  display: flex;
  align-items: center;
  margin-left: auto;
  margin-right: 40px;
}
.percent {
  font-size: 24px;
  margin-left: 7px;
}
.battery {
  margin-left: 9px;
}
.clock {
  margin: 0 48px 0 43px;
}

/* window */
.window {
  flex: 1;
  min-height: 0;
  display: flex;
  flex-direction: column;
  background: #535353;
  border: 2px solid #393939;
  border-top: 3px solid #35383d;
  border-radius: 12px 12px 0 0;
  overflow: hidden;
}
.titlebar {
  height: 43px;
  flex: none;
  display: flex;
  align-items: center;
  border-bottom: 2px solid #393939;
}
.lights {
  display: flex;
  gap: 16px;
  margin-left: 16px;
  width: 1254px;
  margin-top: -2px;
}
.lights i {
  width: 24px;
  height: 24px;
  border-radius: 50%;
}
.lights .close {
  background: radial-gradient(circle, #4d0000 3.5px, #ff5f57 4.5px);
}
.lights .minimize {
  background: #febc2e;
}
.lights .maximize {
  background: #28c840;
}
.title {
  font-size: 27px;
  color: #e0e0e0;
  margin-top: 3px;
  text-shadow: 0 -1px 1px #333;
}
.options {
  height: 65px;
  flex: none;
  display: flex;
  align-items: center;
  border-bottom: 3px solid #393939;
  font-weight: 500;
}
.check {
  box-sizing: border-box;
  flex: none;
  width: 20px;
  height: 20px;
  border: 2px solid #7b7b7b;
  border-radius: 4px;
  background: #474747;
}
.check.first {
  margin-left: 14px;
}
.label {
  margin-left: 8px;
}
.label.dim {
  margin-left: 0;
  color: #898989;
}
.mode {
  margin-left: 21px;
}
.right {
  margin-left: auto;
  margin-right: 12px;
}
.select {
  box-sizing: border-box;
  flex: none;
  height: 38px;
  display: flex;
  align-items: center;
  justify-content: space-between;
  border: 2px solid #646464;
  border-radius: 5px;
  background: #434343;
}
.group {
  width: 107px;
  margin-left: 15px;
  padding: 0 5px 0 13px;
}

.workspace {
  flex: 1;
  min-height: 0;
  display: flex;
  border-bottom: 2px solid #393939;
  margin-bottom: -2px;
}
.toolbar {
  width: 74px;
  flex: none;
  background: #535353;
  border-right: 2px solid #393939;
}
.dock-head {
  height: 22px;
  display: flex;
  align-items: center;
  padding-left: 9px;
  background: #434343;
  border-bottom: 2px solid #393939;
}
.grip {
  display: block;
  width: 38px;
  height: 8px;
  margin: 6px auto 0;
  background: repeating-linear-gradient(90deg, #3f3f3f 0 2px, #535353 2px 4px);
}
.tools {
  margin-top: 18.5px;
}
.tool {
  height: 51.95px;
}
.tool svg,
.toolbar > svg {
  margin-left: 2px;
  fill: #dedede;
}

/* document area */
.documents {
  flex: none;
  width: 2168px;
  margin-left: 2px;
  border-left: 2px solid #393939;
  border-right: 2px solid #393939;
  display: flex;
  flex-direction: column;
}
.tabs {
  height: 56px;
  flex: none;
  display: flex;
  background: #424242;
  border-bottom: 2px solid #393939;
  font-family: "Open Sans", "Noto Sans", sans-serif;
  font-weight: 700;
  font-size: 23px;
}
.tab {
  box-sizing: border-box;
  width: 776px;
  display: flex;
  align-items: center;
  padding-left: 16px;
  border-right: 2px solid #393939;
  color: #adadad;
}
.tab span {
  margin: 1px 0 0 20px;
}
.tab.active {
  width: 1314px;
  background: #535353;
  color: #f4f4f4;
}
.canvas {
  flex: 1;
  min-height: 0;
  background: #282828;
  border-right: 32px solid #4a4a4a;
}
.artboard {
  box-sizing: border-box;
  width: 827px;
  height: 1061px;
  margin: 244px 0 0 655px;
  padding: 25px 28px;
  background: #dcd5d3;
}
.page {
  box-sizing: border-box;
  height: 1011px;
  padding: 27px 0 0 40px;
  background: #fff;
  color: #1c1c1c;
  display: flex;
  flex-direction: column;
}
.studio {
  height: 20px;
  line-height: 20px;
  margin-left: 240px;
  font-size: 14px;
  color: #606060;
}
h1 {
  height: 60px;
  margin: 6px 0 0 190px;
  font: italic 400 70px/60px "Liberation Serif", serif;
  color: #5c5c5c;
}
.rule {
  width: 48px;
  height: 2px;
  margin: 22px 0 0 321px;
  background: #b6937e;
}
h2 {
  height: 16px;
  line-height: 16px;
  font-size: 12.3px;
  font-weight: 600;
}
h2.first {
  margin-top: 25px;
}
h2.second {
  margin-top: 27.6px;
}
.lines {
  margin-top: 9.2px;
  font-size: 9px;
  font-weight: 500;
}
.lines p {
  display: flex;
  height: 10.58px;
  line-height: 10.58px;
}
.blank {
  color: #777;
}
.blank.strong {
  color: #000;
  font-weight: 700;
}
.near {
  margin-left: 3px;
}
.after {
  margin-left: 5.5px;
}
.far {
  margin-left: 13px;
}
.signatures {
  margin-top: 18.5px;
  font-size: 9px;
  font-weight: 500;
}
.signatures p {
  display: flex;
  height: 12px;
  line-height: 12px;
  margin-bottom: 20px;
}
.dated span:nth-child(2) {
  margin-left: 70px;
}
.dated span:nth-child(3) {
  margin-left: 139px;
}
.status {
  height: 32px;
  flex: none;
  display: flex;
  background: #4a4a4a;
}
.zoom {
  box-sizing: border-box;
  width: 120px;
  display: flex;
  align-items: center;
  padding-left: 23px;
  background: #434343;
}
.doc-size {
  box-sizing: border-box;
  width: 367px;
  display: flex;
  align-items: center;
  justify-content: space-between;
  padding: 0 8px 0 78px;
  background: #535353;
  border-right: 2px solid #434343;
  color: #d2d2d2;
  font-weight: 500;
}

/* right side */
.side {
  flex: 1;
  margin-left: 2px;
  border-left: 2px solid #393939;
  display: flex;
  flex-direction: column;
}
.side-head {
  height: 22px;
  flex: none;
  display: flex;
  align-items: center;
  justify-content: space-between;
  padding: 0 12px 0 49px;
  background: #424242;
  border-bottom: 2px solid #393939;
}
.side-body {
  flex: 1;
  min-height: 0;
  display: flex;
}
.dock {
  width: 74px;
  flex: none;
  display: flex;
  flex-direction: column;
  border-right: 2px solid #393939;
}
.cell {
  height: 80px;
  padding-top: 0.1px;
  border-bottom: 2px solid #393939;
}
.cell svg {
  margin-top: 2px;
}
.cell.tall {
  height: 136px;
}
.panel {
  flex: 1;
  margin-left: 2px;
  border-left: 2px solid #393939;
  display: flex;
  flex-direction: column;
  background: #4b4b4b;
}
.panel-tabs {
  height: 56px;
  flex: none;
  display: flex;
  background: #424242;
  font-family: "Open Sans", "Noto Sans", sans-serif;
  font-weight: 700;
  font-size: 22px;
  color: #a9a9a9;
  box-shadow: inset 0 -2px #393939;
}
.ptab {
  box-sizing: border-box;
  width: 105px;
  display: flex;
  align-items: center;
  padding: 0 0 2px 18px;
  border-right: 2px solid #393939;
}
.ptab.active {
  background: #535353;
  color: #f4f4f4;
}
.ptab.channels {
  width: 131px;
  padding-left: 17px;
}
.ptab.paths {
  width: 94px;
}
.burger {
  margin: 19px 12px 0 auto;
}
.row {
  box-sizing: border-box;
  flex: none;
  display: flex;
  align-items: center;
  padding-left: 7px;
  background: #535353;
}
.filter {
  height: 64px;
  padding-top: 10px;
  border-bottom: 2px solid #393939;
}
.kind {
  width: 176px;
  padding: 0 6px 0 16px;
  justify-content: flex-start;
  color: #f4f4f4;
  font-weight: 500;
}
.kind span {
  margin-left: 5px;
}
.kind .chev {
  margin-left: auto;
}
.blend {
  height: 56px;
  border-bottom: 2px solid #393939;
  color: #8c8c8c;
}
.mode-select {
  width: 262px;
  padding: 0 6px 0 14px;
  background: none;
  border-color: #636363;
}
.mode-select svg,
.number svg {
  opacity: 0.3;
}
.field-label {
  margin-left: 6px;
}
.number {
  box-sizing: border-box;
  width: 103px;
  height: 36px;
  margin-left: 7px;
  display: flex;
  align-items: center;
  justify-content: space-between;
  padding: 0 6px 0 5px;
  border: 2px solid #636363;
  border-radius: 5px;
  background: linear-gradient(90deg, transparent 71px, #636363 71px 73px, transparent 73px);
  color: #6c6c6c;
}
.lock {
  height: 59px;
  padding: 0 0 3px 11px;
  color: #8c8c8c;
}
.layer-list {
  flex: 1;
  border-top: 1px solid #454545;
  border-right: 30px solid #474747;
}
.layer {
  height: 49px;
  display: flex;
  border-bottom: 2px solid #434343;
}
.eye {
  width: 59px;
  display: flex;
  align-items: center;
  justify-content: center;
  background: #535353;
  border-right: 2px solid #434343;
}
.hidden-box {
  width: 20px;
  height: 20px;
  border: 2px solid #464646;
}
.layer-main {
  flex: 1;
  display: flex;
  align-items: center;
  padding-left: 9px;
  background: #535353;
  color: #f2f2f2;
  font-weight: 500;
}
.layer-main span {
  margin-left: 18px;
}
.selected .layer-main {
  background: #6a6a6a;
}
.panel-foot {
  flex: none;
  height: 48px;
  border-top: 2px solid #393939;
  background: #535353;
}
</style>
